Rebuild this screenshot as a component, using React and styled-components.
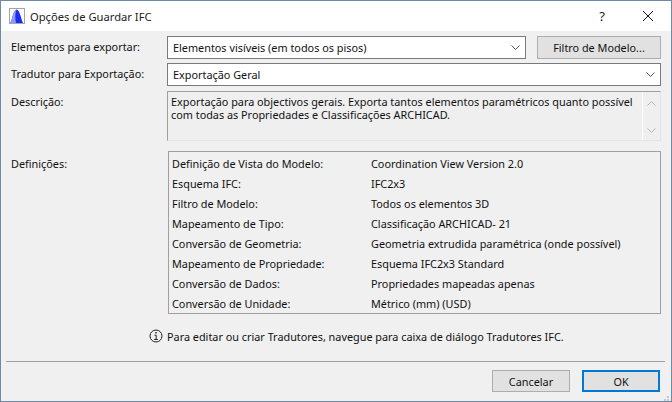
import styled, { createGlobalStyle } from "styled-components";

const GlobalStyle = createGlobalStyle`
	html, body {
		margin: 0;
		padding: 0;
		background: #f0f0f0;
	}
`;

const rows = [
	["Definição de Vista do Modelo:", "Coordination View Version 2.0"],
	["Esquema IFC:", "IFC2x3"],
	["Filtro de Modelo:", "Todos os elementos 3D"],
	["Mapeamento de Tipo:", "Classificação ARCHICAD- 21"],
	["Conversão de Geometria:", "Geometria extrudida paramétrica (onde possível)"],
	["Mapeamento de Propriedade:", "Esquema IFC2x3 Standard"],
	["Conversão de Dados:", "Propriedades mapeadas apenas"],
	["Conversão de Unidade:", "Métrico (mm) (USD)"],
];

function Chevron({ dir }) {
	return (
		<svg width="9" height="5" viewBox="0 0 9 5">
			<path d={dir === "up" ? "M0.5 4.5l4-4 4 4" : "M0.5 0.5l4 4 4-4"} fill="none" stroke="currentColor" strokeWidth="1" />
		</svg>
	);
}

function AppIcon() {
	return (
		<svg width="16" height="16" viewBox="0 0 16 16">
			<rect x="0.5" y="0.5" width="15" height="15" fill="#fff" stroke="#a4a4b0" />
			<path d="M1 15C3 14 4 2 7.5 1.5C11 2 12 11 14 15Z" fill="#1c2cf0" />
			<path d="M1 15C3 14 4 2 7.5 1.5C6 5 6 11 7 15Z" fill="#8f9cf5" />
		</svg>
	);
}

function App() {
	return (
		<>
			<GlobalStyle />
			<Window>
				<TitleBar>
					<AppIcon />
					<TitleText>Opções de Guardar IFC</TitleText>
					<HelpMark>?</HelpMark>
					<CloseMark>
						<svg width="10" height="10" viewBox="0 0 10 10">
							<path d="M0 0l10 10M10 0L0 10" stroke="#111" strokeWidth="1" fill="none" />
						</svg>
					</CloseMark>
				</TitleBar>
				<Body>
					<FormGrid>
						<Label>Elementos para exportar:</Label>
						<ComboRow>
							<Combo $grow>
								<span>Elementos visíveis (em todos os pisos)</span>
								<Chevron />
							</Combo>
							<Button $width="124px" $height="23px">Filtro de Modelo...</Button>
						</ComboRow>
						<Label>Tradutor para Exportação:</Label>
						<Combo>
							<span>Exportação Geral</span>
							<Chevron />
						</Combo>
						<Label $top="3px">Descrição:</Label>
						<DescriptionBox>
							<DescriptionText>
								Exportação para objectivos gerais. Exporta tantos elementos paramétricos quanto possível
								<br />
								com todas as Propriedades e Classificações ARCHICAD.
							</DescriptionText>
							<ScrollTrack>
								<Chevron dir="up" />
								<Chevron />
							</ScrollTrack>
						</DescriptionBox>
						<Label $top="11px">Definições:</Label>
						<DefinitionPanel>
							{rows.map(([name, value]) => (
								<DefinitionRow key={name}>
									<span>{name}</span>
									<span>{value}</span>
								</DefinitionRow>
							))}
						</DefinitionPanel>
					</FormGrid>
					<InfoLine>
						<svg width="14" height="14" viewBox="0 0 14 14">
							<circle cx="7" cy="7" r="6" fill="none" stroke="#222" strokeWidth="1" />
							<rect x="6.3" y="3" width="1.4" height="1.5" fill="#222" />
							<path d="M5.5 6.2h1.7v4.2M5.2 10.5h3.6" fill="none" stroke="#222" strokeWidth="1" />
						</svg>
						<span>Para editar ou criar Tradutores, navegue para caixa de diálogo Tradutores IFC.</span>
					</InfoLine>
					<Separator />
					<Footer>
						<Button $width="78px" $height="22px">Cancelar</Button>
						<Button $width="78px" $height="22px" $primary>OK</Button>
					</Footer>
				</Body>
				<Grip>
					<svg width="9" height="8" viewBox="0 0 9 8">
						<path d="M6 0h2v2H6zM3 3h2v2H3zM6 3h2v2H6zM0 6h2v2H0zM3 6h2v2H3zM6 6h2v2H6z" fill="#c8c8c8" />
					</svg>
				</Grip>
			</Window>
		</>
	);
}
export default App;

const Window = styled.div`
	position: relative;
	box-sizing: border-box;
	width: 672px;
	height: 402px;
	display: flex;
	flex-direction: column;
	border: 1px solid #6b8aa8;
	background: #f0f0f0;
	font-family: "Noto Sans", "Open Sans", sans-serif;
	font-size: 10.85px;
	color: #111;
	overflow: hidden;
`;

const TitleBar = styled.div`
	flex: none;
	height: 30px;
	display: flex;
	align-items: center;
	padding-left: 8px;
	background: #fff;
`;

const TitleText = styled.div`
	margin-left: 5px;
	flex: 1;
	font-size: 11.2px;
	color: #222;
`;

const HelpMark = styled.div`
	width: 46px;
	text-align: center;
	font-size: 13px;
	color: #222;
`;

const CloseMark = styled.div`
	width: 46px;
	display: flex;
	justify-content: center;
`;

const Body = styled.div`
	flex: 1;
	display: flex;
	flex-direction: column;
	padding: 5px 6px 0 5px;
`;

const FormGrid = styled.div`
	display: grid;
	grid-template-columns: 156px 494px;
	grid-template-rows: 23px 24px 50px 169px;
	row-gap: 4px;
	padding-left: 5px;
`;

const Label = styled.div`
	display: flex;
	align-items: ${(p) => (p.$top ? "flex-start" : "center")};
	height: ${(p) => (p.$top ? "auto" : "21px")};
	padding-top: ${(p) => p.$top || "0"};
`;

const ComboRow = styled.div`
	display: flex;
	gap: 11px;
`;

const Combo = styled.div`
	box-sizing: border-box;
	flex: ${(p) => (p.$grow ? 1 : "none")};
	height: 23px;
	display: flex;
	align-items: center;
	justify-content: space-between;
	padding: 0 5px 0 5px;
	background: #fff;
	border: 1px solid #7a7a7a;
	color: #111;

	svg {
		color: #555;
	}
`;

const Button = styled.div`
	box-sizing: border-box;
	flex: none;
	width: ${(p) => p.$width};
	height: ${(p) => p.$height};
	display: flex;
	align-items: center;
	justify-content: center;
	background: #e1e1e1;
	border: ${(p) => (p.$primary ? "2px solid #0078d7" : "1px solid #adadad")};
`;

const DescriptionBox = styled.div`
	box-sizing: border-box;
	height: 50px;
	display: flex;
	background: #efefef;
	border: 1px solid #a0a0a0;
	border-right-color: #e3e3e3;
	border-bottom-color: #e3e3e3;
`;

const DescriptionText = styled.div`
	flex: 1;
	padding: 3px 3px;
	line-height: 13px;
	white-space: nowrap;
`;

const ScrollTrack = styled.div`
	flex: none;
	width: 18px;
	display: flex;
	flex-direction: column;
	align-items: center;
	justify-content: space-between;
	padding: 9px 0 7px;
	box-sizing: border-box;
	border-left: 1px solid #fff;
	color: #b4b4b4;
`;

const DefinitionPanel = styled.div`
	box-sizing: border-box;
	margin: 6px 0 0 1px;
	height: 163px;
	padding: 1px 0 0 3px;
	background: #f0f0f0;
	border: 1px solid #a0a0a0;
`;

const DefinitionRow = styled.div`
	display: grid;
	grid-template-columns: 199px 1fr;
	height: 20px;
	align-items: center;
`;

const InfoLine = styled.div`
	margin-top: 14px;
	height: 16px;
	display: flex;
	align-items: center;
	gap: 4px;
	padding-left: 143px;
`;

const Separator = styled.div`
	flex: none;
	margin-top: 17px;
	height: 1px;
	background: #a0a0a0;
`;

const Footer = styled.div`
	display: flex;
	justify-content: flex-end;
	gap: 12px;
	margin-top: 8px;
	padding-right: 5px;
`;

const Grip = styled.div`
	position: absolute;
	right: 1px;
	bottom: 1px;
	width: 9px;
	height: 8px;
`;
